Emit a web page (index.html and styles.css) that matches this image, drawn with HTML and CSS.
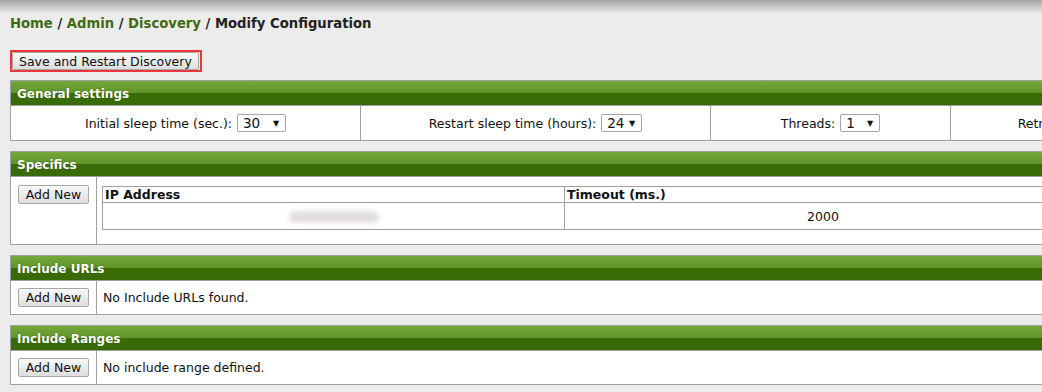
FILE: index.html
```html
<!DOCTYPE html>
<html lang="en">
<head>
    <meta charset="UTF-8">
    <title>Modify Configuration</title>
    <link rel="stylesheet" href="styles.css">
</head>
<body>
    <div class="top-shade"></div>

    <div class="breadcrumb">
        <a href="#">Home</a> / <a href="#">Admin</a> / <a href="#">Discovery</a> / <span class="current">Modify Configuration</span>
    </div>

    <div class="save-bar">
        <span class="highlight"><button class="btn" type="button">Save and Restart Discovery</button></span>
    </div>

    <div class="panel">
        <div class="panel-head">General settings</div>
        <div class="settings-row">
            <div class="setting s1">Initial sleep time (sec.): <span class="select sel-49"><span>30</span><i>&#9660;</i></span></div>
            <div class="setting s2">Restart sleep time (hours): <span class="select sel-41"><span>24</span><i>&#9660;</i></span></div>
            <div class="setting s3">Threads: <span class="select sel-40"><span>1</span><i>&#9660;</i></span></div>
            <div class="setting s4">Retries: <span class="select sel-40"><span>1</span><i>&#9660;</i></span></div>
        </div>
    </div>

    <div class="panel">
        <div class="panel-head">Specifics</div>
        <div class="panel-body">
            <div class="side"><button class="btn" type="button">Add New</button></div>
            <div class="main main-pad">
                <table class="grid">
                    <tr>
                        <th class="col-ip">IP Address</th>
                        <th>Timeout (ms.)</th>
                    </tr>
                    <tr>
                        <td class="center"><span class="redacted"></span></td>
                        <td class="center">2000</td>
                    </tr>
                </table>
            </div>
        </div>
    </div>

    <div class="panel">
        <div class="panel-head">Include URLs</div>
        <div class="panel-body">
            <div class="side side-tight"><button class="btn" type="button">Add New</button></div>
            <div class="main main-text">No Include URLs found.</div>
        </div>
    </div>

    <div class="panel">
        <div class="panel-head">Include Ranges</div>
        <div class="panel-body">
            <div class="side side-tight"><button class="btn" type="button">Add New</button></div>
            <div class="main main-text">No include range defined.</div>
        </div>
    </div>
</body>
</html>
```

FILE: styles.css
```css
html {
    overflow: hidden;
}

body {
    margin: 0;
    background: #ececec;
    font-family: "DejaVu Sans", Verdana, sans-serif;
    font-size: 12.5px;
    color: #111;
}

.top-shade {
    height: 14px;
    background: linear-gradient(#a4a4a4, #ececec);
}

.breadcrumb {
    padding-left: 10px;
    margin-top: 1px;
    height: 18px;
    line-height: 18px;
    font-size: 13.2px;
    font-weight: bold;
    color: #222;
}

.breadcrumb a {
    color: #3f6b14;
    text-decoration: none;
}

.save-bar {
    padding: 17px 0 0 10px;
    height: 22px;
}

.highlight {
    display: inline-block;
    border: 2px solid #e8383d;
    padding: 0 1px 0 0;
    line-height: 0;
}

.btn {
    font-family: "DejaVu Sans", Verdana, sans-serif;
    font-size: 12.5px;
    color: #111;
    height: 19px;
    padding: 0 7px;
    border: 1px solid #a8a8a8;
    border-radius: 2px;
    background: linear-gradient(#f8f8f8, #dedede);
    line-height: 17px;
}

.highlight .btn {
    height: 18px;
    padding: 0 6px;
}

.panel {
    width: 1100px;
    margin: 8px 0 10px 10px;
    border: 1px solid #a0a0a0;
    background: #fff;
    overflow: hidden;
}

.panel-head {
    height: 24px;
    line-height: 26px;
    padding-left: 6px;
    color: #fff;
    font-weight: bold;
    font-size: 12px;
    text-shadow: 0 0 1px #2c5200;
    background: linear-gradient(#76a83a, #5f942a 50%, #3a6b07 50%, #386a05);
    border-bottom: 1px solid #a0a0a0;
}

.settings-row {
    display: flex;
    height: 34px;
    font-size: 12.5px;
}

.setting {
    flex: none;
    display: flex;
    align-items: center;
    justify-content: center;
    gap: 5px;
    border-right: 1px solid #a0a0a0;
}

.s1 { width: 349px; }
.s2 { width: 349px; }
.s3 { width: 239px; }
.s4 { width: 226px; }

.select {
    display: inline-flex;
    justify-content: space-between;
    align-items: center;
    height: 16px;
    padding: 0 6px 0 5px;
    border: 1px solid #a5a5a5;
    border-radius: 2px;
    background: #fff;
    font-size: 13.5px;
    color: #111;
}

.select i {
    font-style: normal;
    font-size: 8px;
}

.sel-49 { width: 36px; }
.sel-41 { width: 28px; }
.sel-40 { width: 27px; }

.panel-body {
    display: flex;
}

.side {
    width: 86px;
    flex: none;
    padding: 8px 0 0 0;
    box-sizing: border-box;
    border-right: 1px solid #a0a0a0;
    display: flex;
    justify-content: center;
    align-items: flex-start;
}

.side-tight {
    align-items: center;
    padding: 0;
}

.main {
    flex: 1;
}

.main-pad {
    padding: 9px 0 14px 5px;
}

.main-text {
    height: 33px;
    line-height: 33px;
    padding-left: 6px;
}

.grid {
    border-collapse: collapse;
    width: 980px;
    font-size: 12.5px;
}

.grid th {
    text-align: left;
    font-weight: bold;
    padding: 0 2px;
    height: 15px;
    line-height: 15px;
    border: 1px solid #a0a0a0;
}

.grid td {
    height: 24px;
    border: 1px solid #a0a0a0;
}

.col-ip {
    width: 457px;
}

.center {
    text-align: center;
}

.redacted {
    display: inline-block;
    width: 90px;
    height: 12px;
    border-radius: 6px;
    background: #e4dfdf;
    filter: blur(2px);
    vertical-align: middle;
}
```
